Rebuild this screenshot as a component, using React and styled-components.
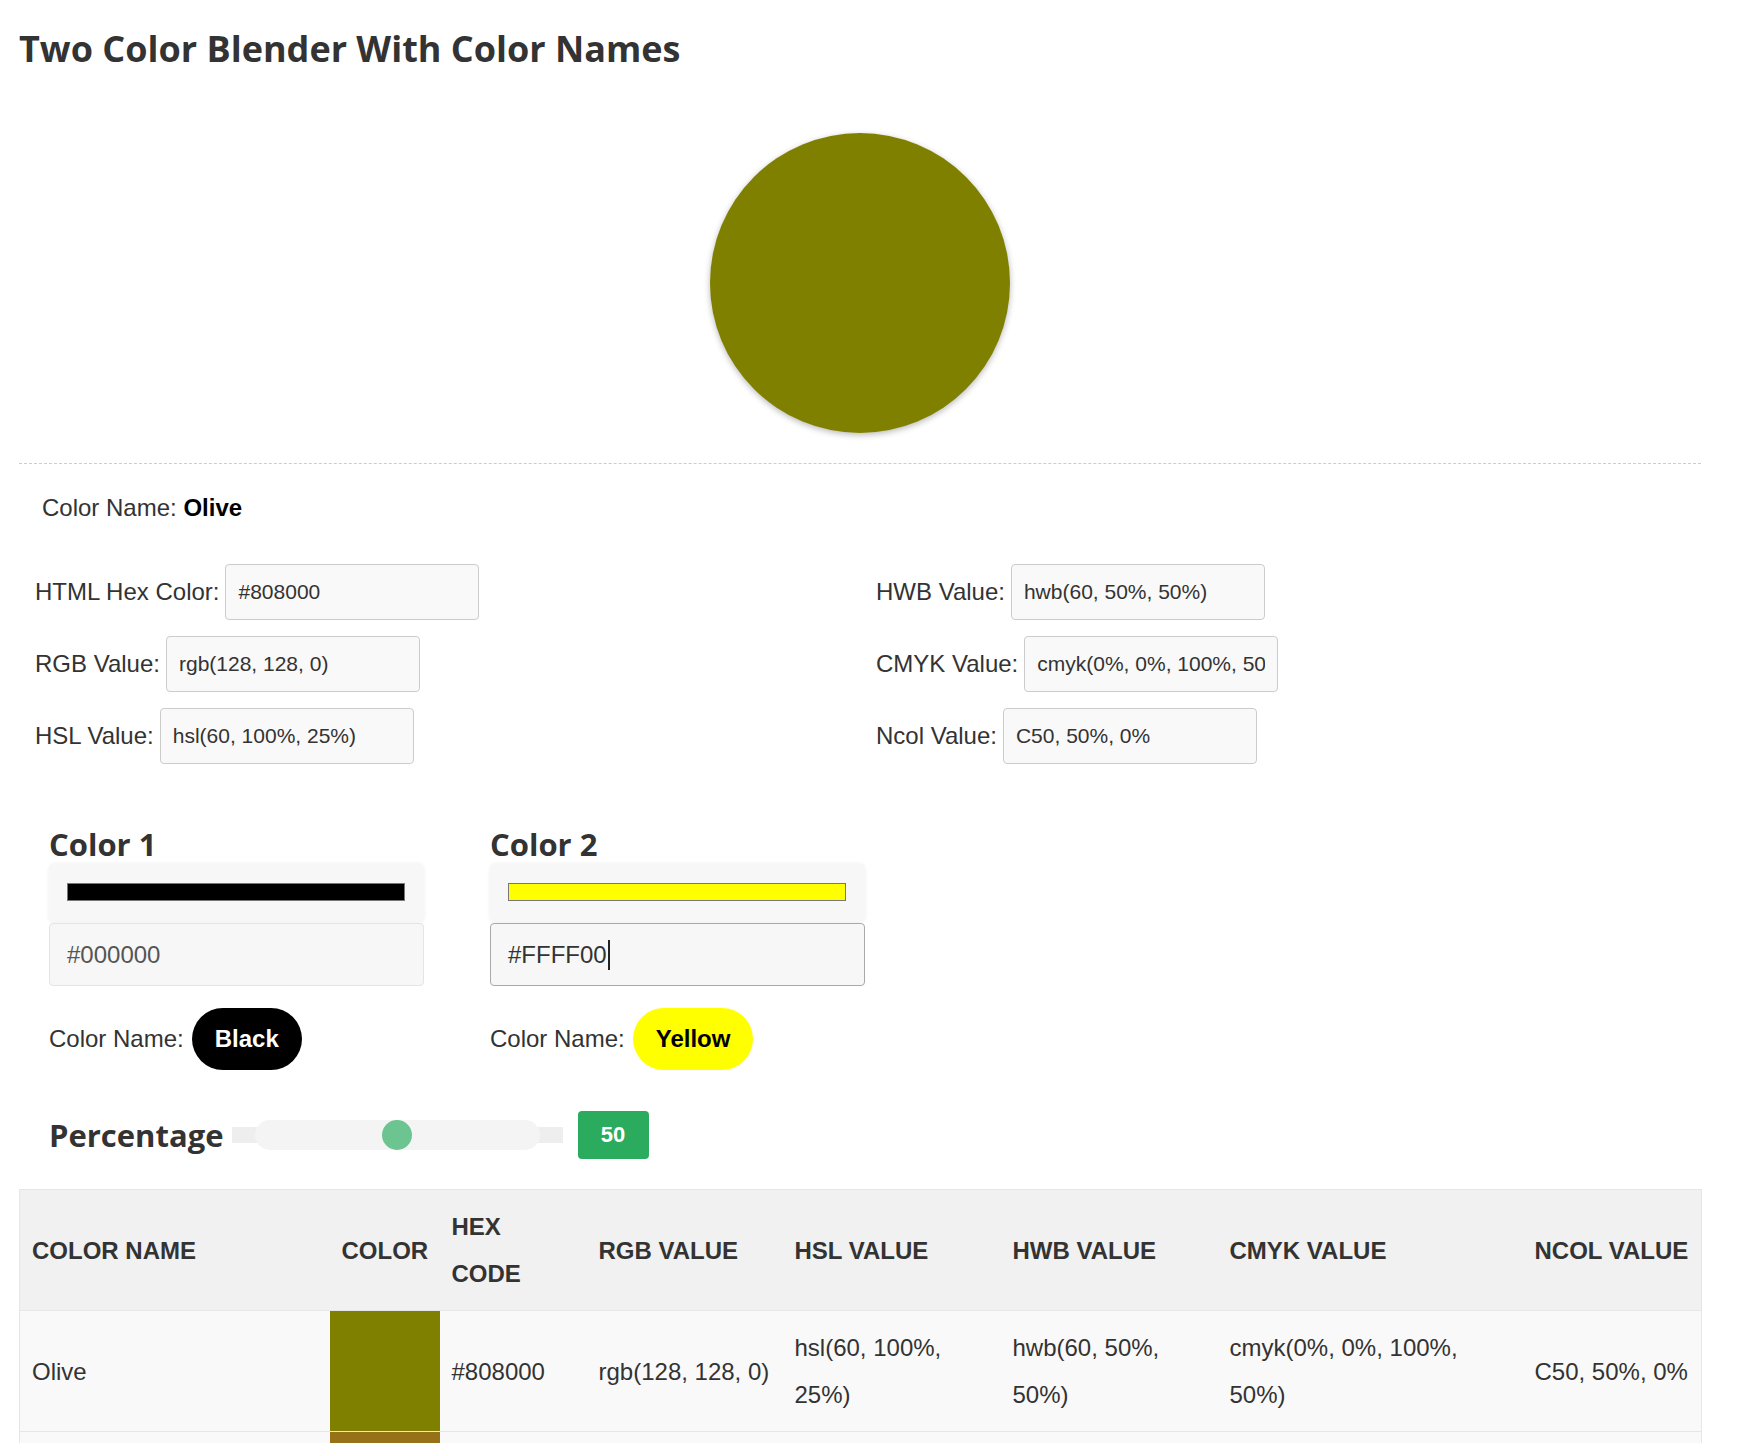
import React from "react";
import styled, { createGlobalStyle } from "styled-components";

const GlobalStyle = createGlobalStyle`
  html, body { margin: 0; padding: 0; background: #ffffff; }
  body {
    font-family: "Liberation Sans", Arial, sans-serif;
    color: #333333;
  }
  * { box-sizing: border-box; }
`;

const Page = styled.div`
  width: 1682px;
  margin-left: 19px;
  padding-bottom: 40px;
`;

const Title = styled.h1`
  margin: 24px 0 0;
  font-family: "Open Sans", "Liberation Sans", sans-serif;
  font-weight: 700;
  font-size: 36px;
  line-height: 49px;
  color: #333333;
`;

const Preview = styled.div`
  display: flex;
  justify-content: center;
  padding: 60px 0 30px;
  border-bottom: 1px dashed #cccccc;
`;

const Circle = styled.div`
  width: 300px;
  height: 300px;
  border-radius: 50%;
  background: ${(p) => p.$color};
  box-shadow: 0 2px 6px rgba(0, 0, 0, 0.28);
`;

const NameLine = styled.div`
  margin: 30px 0 0 23px;
  font-size: 24px;
  line-height: 28px;
  color: #333333;
  b { color: #000000; font-weight: 700; }
`;

const ValuesGrid = styled.div`
  display: grid;
  grid-template-columns: 1fr 1fr;
  margin-top: 42px;
`;

const ValuesColumn = styled.div`
  display: flex;
  flex-direction: column;
  gap: 16px;
  padding: 0 16px;
`;

const FieldRow = styled.label`
  display: flex;
  align-items: center;
  gap: 6px;
  font-size: 24px;
  color: #333333;
`;

const ValueInput = styled.input`
  width: 254px;
  height: 56px;
  padding: 0 12px;
  border: 1px solid #cccccc;
  border-radius: 4px;
  background: #f9f9f9;
  font-family: "Liberation Sans", Arial, sans-serif;
  font-size: 21px;
  color: #333333;
  outline: none;
`;

const BlendRow = styled.div`
  display: flex;
  gap: 66px;
  margin-top: 62px;
  padding-left: 30px;
`;

const BlendColumn = styled.div`
  width: 375px;
  display: flex;
  flex-direction: column;
`;

const ColorHeading = styled.h2`
  margin: 0;
  font-family: "Open Sans", "Liberation Sans", sans-serif;
  font-weight: 700;
  font-size: 31px;
  line-height: 37px;
  color: #333333;
`;

const PickerPanel = styled.div`
  height: 59px;
  padding: 20px 19px 21px 18px;
  background: #f7f7f7;
  border-radius: 6px;
  box-shadow: 0 1px 4px rgba(0, 0, 0, 0.07);
`;

const PickerBar = styled.div`
  height: 18px;
  border: 1px solid #777777;
  background: ${(p) => p.$color};
`;

const HexField = styled.div`
  margin-top: 1px;
  height: 63px;
  padding: 0 17px;
  display: flex;
  align-items: center;
  border: 1px solid ${(p) => (p.$focused ? "#a9a9a9" : "#e4e4e4")};
  border-radius: 4px;
  background: #f7f7f7;
  font-size: 24px;
  color: ${(p) => (p.$focused ? "#333333" : "#555555")};
`;

const Caret = styled.span`
  display: inline-block;
  width: 2px;
  height: 30px;
  margin-left: 1px;
  background: #222222;
`;

const NameRow = styled.div`
  margin-top: 22px;
  display: flex;
  align-items: center;
  gap: 8px;
  font-size: 24px;
  color: #333333;
`;

const NamePill = styled.span`
  height: 62px;
  padding: 0 23px;
  display: inline-flex;
  align-items: center;
  border-radius: 31px;
  background: ${(p) => p.$bg};
  color: ${(p) => p.$fg};
  font-weight: 700;
  font-size: 24px;
`;

const PercentRow = styled.div`
  margin-top: 41px;
  padding-left: 30px;
  height: 48px;
  display: flex;
  align-items: center;
`;

const PercentLabel = styled.span`
  margin-right: 8px;
  font-family: "Open Sans", "Liberation Sans", sans-serif;
  font-weight: 700;
  font-size: 31px;
  line-height: 40px;
  color: #333333;
`;

const SliderOuter = styled.div`
  width: 331px;
  height: 16px;
  margin-right: 15px;
  display: flex;
  align-items: center;
  justify-content: center;
  background: #eeeeee;
`;

const SliderTrack = styled.div`
  position: relative;
  flex-shrink: 0;
  width: 285px;
  height: 30px;
  border-radius: 15px;
  background: #f4f4f4;
`;

const SliderThumb = styled.div`
  position: absolute;
  top: 0;
  width: 30px;
  height: 30px;
  margin-left: -15px;
  border-radius: 50%;
  background: #6cc490;
`;

const Badge = styled.div`
  width: 71px;
  height: 48px;
  display: flex;
  align-items: center;
  justify-content: center;
  border-radius: 4px;
  background: #2bab5e;
  color: #ffffff;
  font-weight: 700;
  font-size: 22px;
`;

const Table = styled.table`
  margin-top: 30px;
  width: 1682px;
  border-collapse: collapse;
  table-layout: fixed;
  border: 1px solid #e6e6e6;
`;

const Col = styled.col`
  width: ${(p) => p.$w}px;
`;

const Th = styled.th`
  padding: 13px 12px;
  background: #f1f1f1;
  text-align: left;
  vertical-align: middle;
  font-weight: 700;
  font-size: 24px;
  line-height: 47px;
  text-transform: uppercase;
  color: #333333;
`;

const Td = styled.td`
  padding: 13px 12px;
  background: #f9f9f9;
  border-top: 1px solid #e6e6e6;
  vertical-align: middle;
  font-size: 24px;
  line-height: 47px;
  color: #333333;
`;

const SwatchTd = styled.td`
  padding: 0;
  border-top: 1px solid #e6e6e6;
  background: ${(p) => p.$color};
`;

const leftValues = [
  ["HTML Hex Color:", "#808000"],
  ["RGB Value:", "rgb(128, 128, 0)"],
  ["HSL Value:", "hsl(60, 100%, 25%)"],
];

const rightValues = [
  ["HWB Value:", "hwb(60, 50%, 50%)"],
  ["CMYK Value:", "cmyk(0%, 0%, 100%, 50%)"],
  ["Ncol Value:", "C50, 50%, 0%"],
];

const colWidths = [310, 110, 147, 196, 218, 217, 305, 179];
const headers = [
  "Color Name",
  "Color",
  "Hex Code",
  "RGB Value",
  "HSL Value",
  "HWB Value",
  "CMYK Value",
  "Ncol Value",
];

const rows = [
  {
    name: "Olive",
    hex: "#808000",
    rgb: "rgb(128, 128, 0)",
    hsl: "hsl(60, 100%, 25%)",
    hwb: "hwb(60, 50%, 50%)",
    cmyk: "cmyk(0%, 0%, 100%, 50%)",
    ncol: "C50, 50%, 0%",
  },
  {
    name: "Drab",
    hex: "#967117",
    rgb: "rgb(150, 113, 23)",
    hsl: "hsl(43, 73%, 34%)",
    hwb: "hwb(43, 9%, 41%)",
    cmyk: "cmyk(0%, 25%, 85%, 41%)",
    ncol: "R71, 9%, 41%",
  },
];

export default function App() {
  const percent = 50;
  return (
    <>
      <GlobalStyle />
      <Page>
        <Title>Two Color Blender With Color Names</Title>
        <Preview>
          <Circle $color="#808000" />
        </Preview>
        <NameLine>
          Color Name: <b>Olive</b>
        </NameLine>
        <ValuesGrid>
          <ValuesColumn>
            {leftValues.map(([label, value]) => (
              <FieldRow key={label}>
                {label}
                <ValueInput readOnly value={value} />
              </FieldRow>
            ))}
          </ValuesColumn>
          <ValuesColumn>
            {rightValues.map(([label, value]) => (
              <FieldRow key={label}>
                {label}
                <ValueInput readOnly value={value} />
              </FieldRow>
            ))}
          </ValuesColumn>
        </ValuesGrid>

        <BlendRow>
          <BlendColumn>
            <ColorHeading>Color 1</ColorHeading>
            <PickerPanel>
              <PickerBar $color="#000000" />
            </PickerPanel>
            <HexField>#000000</HexField>
            <NameRow>
              Color Name:
              <NamePill $bg="#000000" $fg="#ffffff">Black</NamePill>
            </NameRow>
          </BlendColumn>
          <BlendColumn>
            <ColorHeading>Color 2</ColorHeading>
            <PickerPanel>
              <PickerBar $color="#ffff00" />
            </PickerPanel>
            <HexField $focused>
              #FFFF00
              <Caret />
            </HexField>
            <NameRow>
              Color Name:
              <NamePill $bg="#ffff00" $fg="#000000">Yellow</NamePill>
            </NameRow>
          </BlendColumn>
        </BlendRow>

        <PercentRow>
          <PercentLabel>Percentage</PercentLabel>
          <SliderOuter>
            <SliderTrack>
              <SliderThumb style={{ left: `${percent}%` }} />
            </SliderTrack>
          </SliderOuter>
          <Badge>{percent}</Badge>
        </PercentRow>

        <Table>
          <colgroup>
            {colWidths.map((w, i) => (
              <Col key={i} $w={w} />
            ))}
          </colgroup>
          <thead>
            <tr>
              {headers.map((h) => (
                <Th key={h}>{h}</Th>
              ))}
            </tr>
          </thead>
          <tbody>
            {rows.map((r) => (
              <tr key={r.name}>
                <Td>{r.name}</Td>
                <SwatchTd $color={r.hex} />
                <Td>{r.hex}</Td>
                <Td>{r.rgb}</Td>
                <Td>{r.hsl}</Td>
                <Td>{r.hwb}</Td>
                <Td>{r.cmyk}</Td>
                <Td>{r.ncol}</Td>
              </tr>
            ))}
          </tbody>
        </Table>
      </Page>
    </>
  );
}
